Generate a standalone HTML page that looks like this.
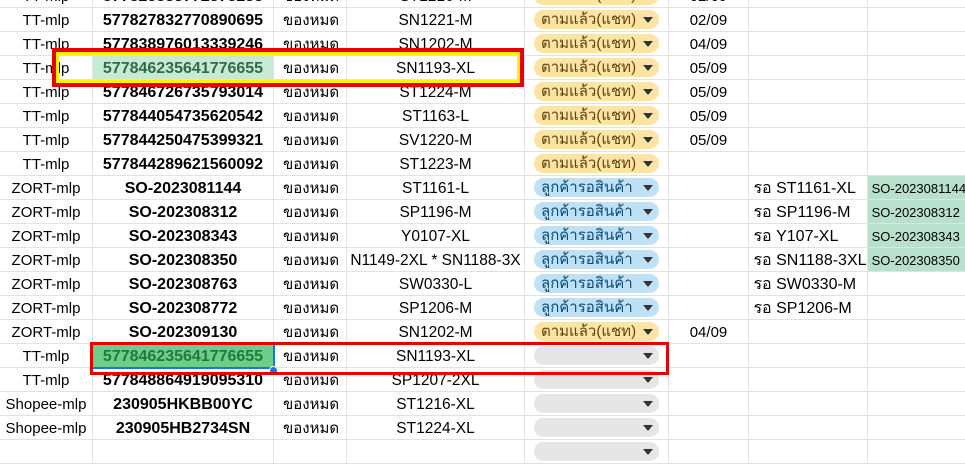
<!DOCTYPE html>
<html><head><meta charset="utf-8"><style>
body{margin:0;width:965px;height:452px;overflow:hidden;background:#fff;font-family:"Liberation Sans",Arial,"Noto Sans CJK SC",sans-serif;font-size:15px;color:#000;position:relative}
.r{position:absolute;left:0;height:24px;width:965px}
.c{position:absolute;top:0;height:23px;line-height:25px;border-right:1px solid #e2e2e2;border-bottom:1px solid #e2e2e2;white-space:nowrap;overflow:hidden;box-sizing:content-box}
.a{left:0;width:92px;text-align:center}
.b{left:93px;width:180px;text-align:center;font-weight:bold;font-size:16px}
.cc{left:274px;width:72px;text-align:left;padding-left:0}
.cc span{padding-left:9px}
.d{left:347px;width:177px;text-align:center;font-size:15.5px}
.d.w{text-align:right;direction:rtl}
.e{left:525px;width:143px}
.f{left:669px;width:79px;text-align:center}
.g{left:749px;width:118px;padding-left:0;font-size:16px}
.h{left:868px;width:97px;font-size:13px}
.chip{position:absolute;left:9px;top:2px;width:125px;height:19px;border-radius:10px;line-height:20px;font-size:15px;padding-left:7px;box-sizing:border-box}
.y{background:#fde4a5;color:#5b4410}
.bl{background:#bfe1f6;color:#0b4a7a}
.gr{background:#e6e6e9}
.chip i{position:absolute;right:6px;top:7px;width:0;height:0;border-left:5px solid transparent;border-right:5px solid transparent;border-top:6px solid #333}
</style></head><body>
<div class="r" style="top:-16px"><div class="c a">TT-mlp</div><div class="c b">577825833772378238</div><div class="c cc"><span>ของหมด</span></div><div class="c d">ST1216-M</div><div class="c e"><div class="chip y">ตามแล้ว(แชท)<i></i></div></div><div class="c f">02/09</div><div class="c g"></div><div class="c h"></div></div>
<div class="r" style="top:8px"><div class="c a">TT-mlp</div><div class="c b">577827832770890695</div><div class="c cc"><span>ของหมด</span></div><div class="c d">SN1221-M</div><div class="c e"><div class="chip y">ตามแล้ว(แชท)<i></i></div></div><div class="c f">02/09</div><div class="c g"></div><div class="c h"></div></div>
<div class="r" style="top:32px"><div class="c a">TT-mlp</div><div class="c b">577838976013339246</div><div class="c cc"><span>ของหมด</span></div><div class="c d">SN1202-M</div><div class="c e"><div class="chip y">ตามแล้ว(แชท)<i></i></div></div><div class="c f">04/09</div><div class="c g"></div><div class="c h"></div></div>
<div class="r" style="top:56px"><div class="c a">TT-mlp</div><div class="c b" style="background:#c7ead3;color:#2f6b45">577846235641776655</div><div class="c cc"><span>ของหมด</span></div><div class="c d">SN1193-XL</div><div class="c e"><div class="chip y">ตามแล้ว(แชท)<i></i></div></div><div class="c f">05/09</div><div class="c g"></div><div class="c h"></div></div>
<div class="r" style="top:80px"><div class="c a">TT-mlp</div><div class="c b">577846726735793014</div><div class="c cc"><span>ของหมด</span></div><div class="c d">ST1224-M</div><div class="c e"><div class="chip y">ตามแล้ว(แชท)<i></i></div></div><div class="c f">05/09</div><div class="c g"></div><div class="c h"></div></div>
<div class="r" style="top:104px"><div class="c a">TT-mlp</div><div class="c b">577844054735620542</div><div class="c cc"><span>ของหมด</span></div><div class="c d">ST1163-L</div><div class="c e"><div class="chip y">ตามแล้ว(แชท)<i></i></div></div><div class="c f">05/09</div><div class="c g"></div><div class="c h"></div></div>
<div class="r" style="top:128px"><div class="c a">TT-mlp</div><div class="c b">577844250475399321</div><div class="c cc"><span>ของหมด</span></div><div class="c d">SV1220-M</div><div class="c e"><div class="chip y">ตามแล้ว(แชท)<i></i></div></div><div class="c f">05/09</div><div class="c g"></div><div class="c h"></div></div>
<div class="r" style="top:152px"><div class="c a">TT-mlp</div><div class="c b">577844289621560092</div><div class="c cc"><span>ของหมด</span></div><div class="c d">ST1223-M</div><div class="c e"><div class="chip y">ตามแล้ว(แชท)<i></i></div></div><div class="c f"></div><div class="c g"></div><div class="c h"></div></div>
<div class="r" style="top:176px"><div class="c a">ZORT-mlp</div><div class="c b">SO-2023081144</div><div class="c cc"><span>ของหมด</span></div><div class="c d">ST1161-L</div><div class="c e"><div class="chip bl">ลูกค้ารอสินค้า<i></i></div></div><div class="c f"></div><div class="c g">&nbsp;รอ ST1161-XL</div><div class="c h" style="background:#b7e1cd">&nbsp;SO-2023081144</div></div>
<div class="r" style="top:200px"><div class="c a">ZORT-mlp</div><div class="c b">SO-202308312</div><div class="c cc"><span>ของหมด</span></div><div class="c d">SP1196-M</div><div class="c e"><div class="chip bl">ลูกค้ารอสินค้า<i></i></div></div><div class="c f"></div><div class="c g">&nbsp;รอ SP1196-M</div><div class="c h" style="background:#b7e1cd">&nbsp;SO-202308312</div></div>
<div class="r" style="top:224px"><div class="c a">ZORT-mlp</div><div class="c b">SO-202308343</div><div class="c cc"><span>ของหมด</span></div><div class="c d">Y0107-XL</div><div class="c e"><div class="chip bl">ลูกค้ารอสินค้า<i></i></div></div><div class="c f"></div><div class="c g">&nbsp;รอ Y107-XL</div><div class="c h" style="background:#b7e1cd">&nbsp;SO-202308343</div></div>
<div class="r" style="top:248px"><div class="c a">ZORT-mlp</div><div class="c b">SO-202308350</div><div class="c cc"><span>ของหมด</span></div><div class="c d">N1149-2XL * SN1188-3X</div><div class="c e"><div class="chip bl">ลูกค้ารอสินค้า<i></i></div></div><div class="c f"></div><div class="c g">&nbsp;รอ SN1188-3XL</div><div class="c h" style="background:#b7e1cd">&nbsp;SO-202308350</div></div>
<div class="r" style="top:272px"><div class="c a">ZORT-mlp</div><div class="c b">SO-202308763</div><div class="c cc"><span>ของหมด</span></div><div class="c d">SW0330-L</div><div class="c e"><div class="chip bl">ลูกค้ารอสินค้า<i></i></div></div><div class="c f"></div><div class="c g">&nbsp;รอ SW0330-M</div><div class="c h"></div></div>
<div class="r" style="top:296px"><div class="c a">ZORT-mlp</div><div class="c b">SO-202308772</div><div class="c cc"><span>ของหมด</span></div><div class="c d">SP1206-M</div><div class="c e"><div class="chip bl">ลูกค้ารอสินค้า<i></i></div></div><div class="c f"></div><div class="c g">&nbsp;รอ SP1206-M</div><div class="c h"></div></div>
<div class="r" style="top:320px"><div class="c a">ZORT-mlp</div><div class="c b">SO-202309130</div><div class="c cc"><span>ของหมด</span></div><div class="c d">SN1202-M</div><div class="c e"><div class="chip y">ตามแล้ว(แชท)<i></i></div></div><div class="c f">04/09</div><div class="c g"></div><div class="c h"></div></div>
<div class="r" style="top:344px"><div class="c a">TT-mlp</div><div class="c b" style="background:#6fcd8c;color:#1f7a3e">577846235641776655</div><div class="c cc"><span>ของหมด</span></div><div class="c d">SN1193-XL</div><div class="c e"><div class="chip gr"><i></i></div></div><div class="c f"></div><div class="c g"></div><div class="c h"></div></div>
<div class="r" style="top:368px"><div class="c a">TT-mlp</div><div class="c b">577848864919095310</div><div class="c cc"><span>ของหมด</span></div><div class="c d">SP1207-2XL</div><div class="c e"><div class="chip gr"><i></i></div></div><div class="c f"></div><div class="c g"></div><div class="c h"></div></div>
<div class="r" style="top:392px"><div class="c a">Shopee-mlp</div><div class="c b">230905HKBB00YC</div><div class="c cc"><span>ของหมด</span></div><div class="c d">ST1216-XL</div><div class="c e"><div class="chip gr"><i></i></div></div><div class="c f"></div><div class="c g"></div><div class="c h"></div></div>
<div class="r" style="top:416px"><div class="c a">Shopee-mlp</div><div class="c b">230905HB2734SN</div><div class="c cc"><span>ของหมด</span></div><div class="c d">ST1224-XL</div><div class="c e"><div class="chip gr"><i></i></div></div><div class="c f"></div><div class="c g"></div><div class="c h"></div></div>
<div class="r" style="top:440px"><div class="c a"></div><div class="c b"></div><div class="c cc"></div><div class="c d"></div><div class="c e"><div class="chip gr"><i></i></div></div><div class="c f"></div><div class="c g"></div><div class="c h"></div></div>
<div style="position:absolute;left:92px;top:344px;width:180px;height:22px;border:1px solid #1a73e8;border-width:1px 2px 2px 1px"></div>
<div style="position:absolute;left:269px;top:366px;width:7px;height:7px;border-radius:50%;background:#1a73e8;border:1px solid #fff"></div>
<div style="position:absolute;left:52px;top:48px;width:464px;height:31px;border:4px solid #e80000"><div style="position:absolute;inset:0;border:3px solid #fff200"></div></div>
<div style="position:absolute;left:90px;top:342px;width:573px;height:27px;border:3px solid #e80000"></div>
</body></html>
